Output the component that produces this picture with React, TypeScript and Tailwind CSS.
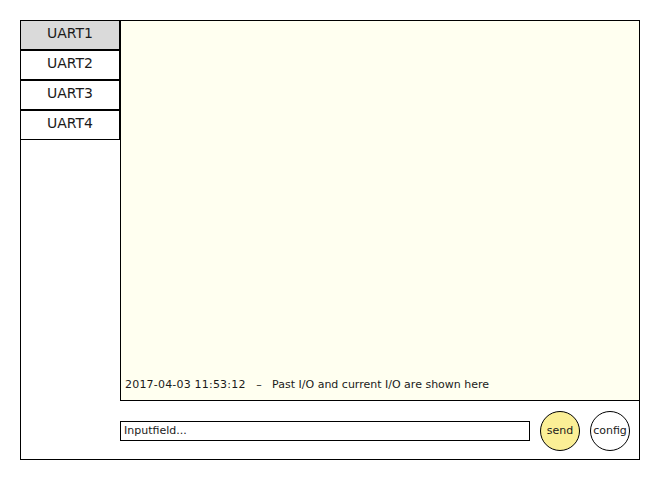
import React from "react";

export default function App() {
  const tabs = ["UART1", "UART2", "UART3", "UART4"];
  return (
    <div className="w-[660px] h-[480px] bg-white pt-5 pl-5" style={{ fontFamily: '"DejaVu Sans", sans-serif' }}>
      <div className="w-[620px] h-[440px] border border-black flex flex-col">
        <div className="flex h-[380px]">
          <div className="w-[100px] -ml-px -mt-px flex flex-col">
            {tabs.map((t, i) => (
              <div
                key={t}
                className={`h-[30px] border border-black flex items-center justify-center pb-[3px] text-[14px] text-[#1a1a1a] ${i === 0 ? "bg-[#dadada]" : "bg-white"}`}
              >
                {t}
              </div>
            ))}
          </div>
          <div className="flex-1 -mt-px -mr-px border border-black bg-[#fffff0] flex flex-col justify-end pl-[4px] pb-[8px]">
            <div className="text-[11px] text-[#1a1a1a] whitespace-pre leading-[14px]">
              <span className="tracking-[0.2px]">2017-04-03 11:53:12</span>
              {"   –   Past I/O and current I/O are shown here"}
            </div>
          </div>
        </div>
        <div className="flex items-center pl-[99px] pt-[10px]">
          <div className="w-[410px] h-[20px] border border-black bg-white flex items-center pl-[3px] text-[11px] text-[#1a1a1a]">
            Inputfield...
          </div>
          <div className="ml-[10px] w-[40px] h-[40px] rounded-full border border-black bg-[#fbef96] flex items-center justify-center text-[11px] text-[#1a1a1a]">
            send
          </div>
          <div className="ml-[10px] w-[40px] h-[40px] rounded-full border border-black bg-white flex items-center justify-center text-[11px] text-[#1a1a1a]">
            config
          </div>
        </div>
      </div>
    </div>
  );
}
